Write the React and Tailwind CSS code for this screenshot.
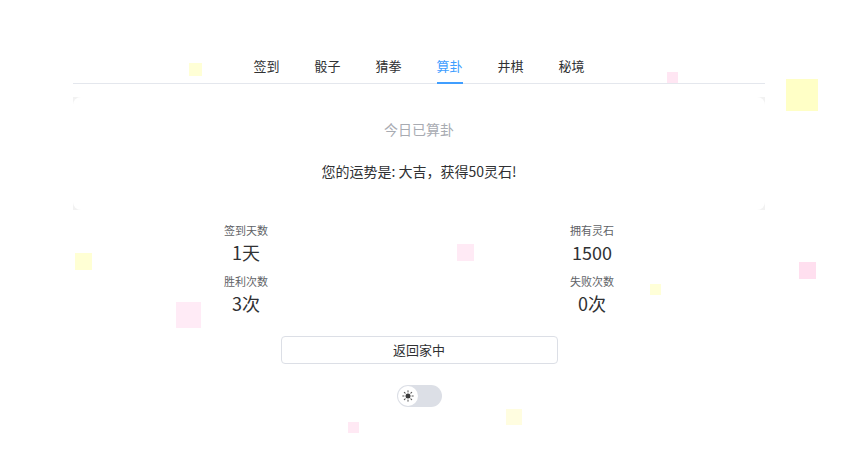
import { useState } from 'react'

const tabs = ['签到', '骰子', '猜拳', '算卦', '井棋', '秘境']

// floating decorative squares
const squares = [
  { cls: 'left-[189px] top-[63px] w-[13px] h-[13px] bg-[#ffffd6]' },
  { cls: 'left-[667px] top-[72px] w-[11px] h-[11px] bg-[#ffe6f3]' },
  { cls: 'left-[786px] top-[79px] w-[32px] h-[32px] bg-[#ffffc6]' },
  { cls: 'left-[75px] top-[253px] w-[17px] h-[17px] bg-[#ffffd4]' },
  { cls: 'left-[457px] top-[244px] w-[17px] h-[17px] bg-[#ffeaf5]' },
  { cls: 'left-[799px] top-[262px] w-[17px] h-[17px] bg-[#ffdfef]' },
  { cls: 'left-[650px] top-[284px] w-[11px] h-[11px] bg-[#ffffd8]' },
  { cls: 'left-[176px] top-[302px] w-[25px] h-[26px] bg-[#ffebf6]' },
  { cls: 'left-[506px] top-[409px] w-[16px] h-[16px] bg-[#fffde0]' },
  { cls: 'left-[348px] top-[422px] w-[11px] h-[11px] bg-[#ffe9f4]' },
]

const stats = [
  ['签到天数', '1天'],
  ['拥有灵石', '1500'],
  ['胜利次数', '3次'],
  ['失败次数', '0次'],
]

function SunIcon() {
  return (
    <svg width="12" height="12" viewBox="0 0 24 24" fill="none">
      <circle cx="12" cy="12" r="5" fill="#3b3b3b" />
      {[0, 45, 90, 135, 180, 225, 270, 315].map(a => (
        <line key={a} x1="12" y1="1.5" x2="12" y2="4" stroke="#555" strokeWidth="2" strokeLinecap="round"
          transform={`rotate(${a} 12 12)`} />
      ))}
    </svg>
  )
}

export default function App() {
  const [active, setActive] = useState('算卦')
  const [dark, setDark] = useState(false)

  return (
    <div className="relative min-h-screen overflow-hidden bg-white text-[#333]"
      style={{ fontFamily: '"Noto Sans CJK SC", "Noto Sans", sans-serif' }}>
      {squares.map((s, i) => (
        <div key={i} className={`absolute ${s.cls}`} />
      ))}

      <div className="relative ml-[73px] w-[692px] pt-[51px]">
        {/* Tabs */}
        <div className="flex justify-center gap-[35px] border-b border-[#e4e7ed]">
          {tabs.map(t => (
            <button key={t} onClick={() => setActive(t)}
              className={`relative h-[32px] pb-[4px] flex items-center text-[13px] leading-none ${t === active ? 'text-[#409eff]' : 'text-[#303133]'}`}>
              {t}
              {t === active && <span className="absolute left-0 right-0 bottom-[-1px] h-[2px] bg-[#409eff]" />}
            </button>
          ))}
        </div>

        {/* Result card */}
        <div className="mt-[13px] bg-[#f2f2f2]">
          <div className="h-[113px] rounded-[8px] bg-white flex flex-col items-center pt-[22px]">
            <div className="text-[14px] leading-[20px] text-[#a8abb2]">今日已算卦</div>
            <div className="mt-[22px] text-[14px] leading-[20px] text-[#303133]">您的运势是: 大吉，获得50灵石!</div>
          </div>
        </div>

        {/* Stats */}
        <div className="mt-[12px] grid grid-cols-2 gap-y-[9px]">
          {stats.map(([label, value]) => (
            <div key={label} className="flex flex-col items-center">
              <div className="text-[11px] leading-[16px] text-[#606266]">{label}</div>
              <div className="mt-[2px] text-[18px] leading-[24px] text-[#303133]">{value}</div>
            </div>
          ))}
        </div>

        {/* Actions */}
        <div className="mt-[21px] flex flex-col items-center">
          <button className="w-[277px] h-[28px] rounded-[4px] border border-[#dcdfe6] bg-white text-[13px] text-[#303133]">
            返回家中
          </button>
          <button onClick={() => setDark(!dark)}
            className="mt-[21px] w-[45px] h-[22px] rounded-full bg-[#dcdfe6] flex items-center px-[1px]">
            <span className="w-[20px] h-[20px] rounded-full bg-white flex items-center justify-center">
              <SunIcon />
            </span>
          </button>
        </div>
      </div>
    </div>
  )
}
